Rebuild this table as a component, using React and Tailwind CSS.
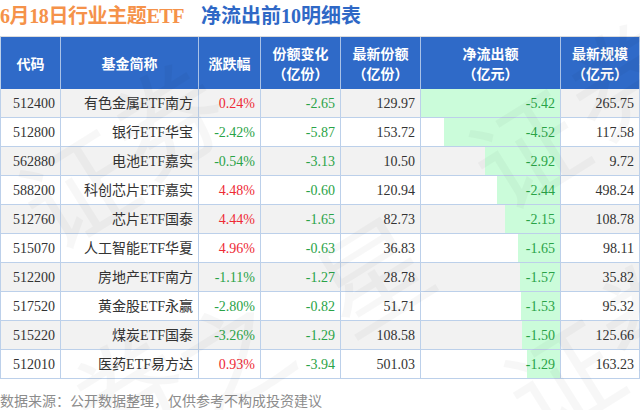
import React from "react";

const rows = [
  ["512400", "有色金属ETF南方", "0.24%", "-2.65", "129.97", -5.42, "265.75"],
  ["512800", "银行ETF华宝", "-2.42%", "-5.87", "153.72", -4.52, "117.58"],
  ["562880", "电池ETF嘉实", "-0.54%", "-3.13", "10.50", -2.92, "9.72"],
  ["588200", "科创芯片ETF嘉实", "4.48%", "-0.60", "120.94", -2.44, "498.24"],
  ["512760", "芯片ETF国泰", "4.44%", "-1.65", "82.73", -2.15, "108.78"],
  ["515070", "人工智能ETF华夏", "4.96%", "-0.63", "36.83", -1.65, "98.11"],
  ["512200", "房地产ETF南方", "-1.11%", "-1.27", "28.78", -1.57, "35.82"],
  ["517520", "黄金股ETF永赢", "-2.80%", "-0.82", "51.71", -1.53, "95.32"],
  ["515220", "煤炭ETF国泰", "-3.26%", "-1.29", "108.58", -1.50, "125.66"],
  ["512010", "医药ETF易方达", "0.93%", "-3.94", "501.03", -1.29, "163.23"],
];

const cols = "grid grid-cols-[60px_138px_62px_80px_80px_140px_79px]";
const font = { fontFamily: '"Liberation Serif", "Noto Sans CJK SC", serif' };

const marks = [
  ["证", 20, 130],
  ["券", 110, 60],
  ["证", 470, 90],
  ["券", 565, 20],
  ["之", 175, 295],
  ["星", 315, 215],
  ["证", 505, 320],
  ["券", 595, 250],
  ["券", 70, 330],
];

function Cell({ children, className = "" }) {
  return (
    <div
      className={`h-[28px] border-r border-[#bcd0ea] flex items-center justify-end pr-[5px] text-[14px] ${className}`}
    >
      {children}
    </div>
  );
}

export default function App() {
  return (
    <div className="relative w-[640px] h-[410px] bg-white overflow-hidden">
      <div
        className="h-[36px] flex items-center pb-[4px] text-[20px] font-bold whitespace-nowrap"
        style={{ fontFamily: '"Liberation Serif", "Noto Sans CJK SC", serif' }}
      >
        <span className="text-[#f5924a] tracking-[-0.4px]">6月18日行业主题ETF</span>
        <span className="text-[#2f68c6] ml-[17px]">净流出前10明细表</span>
      </div>
      <div className="border-t border-[#dcdcdc] border-l border-l-[#bcd0ea]" style={font}>
        <div className={`${cols} h-[52px] bg-[#2f6ac8] text-white font-bold text-[14px] leading-[20px]`} style={{ fontFamily: '"Noto Sans CJK SC", sans-serif' }}>
          {[
            ["代码"],
            ["基金简称"],
            ["涨跌幅"],
            ["份额变化", "（亿份）"],
            ["最新份额", "（亿份）"],
            ["净流出额", "（亿元）"],
            ["最新规模", "（亿元）"],
          ].map((h, i) => (
            <div
              key={i}
              className="border-r border-[#a9c2e8] flex flex-col items-center justify-center text-center"
            >
              {h.map((t, j) => (
                <div key={j}>{t}</div>
              ))}
            </div>
          ))}
        </div>
        {rows.map((r, i) => {
          const bg = i % 2 === 0 ? "bg-[#f2f2f2]" : "bg-white";
          const chgColor = r[2].startsWith("-") ? "text-[#2aa347]" : "text-[#ee2a35]";
          const barW = Math.round((Math.abs(r[5]) / 5.42) * 139);
          return (
            <div key={r[0]} className={`${cols} ${bg} border-b border-[#bcd0ea] text-[#333333]`}>
              <Cell>{r[0]}</Cell>
              <Cell>{r[1]}</Cell>
              <Cell className={chgColor}>{r[2]}</Cell>
              <Cell className="text-[#2aa347]">{r[3]}</Cell>
              <Cell>{r[4]}</Cell>
              <div className="h-[28px] border-r border-[#bcd0ea] flex justify-end">
                <div
                  className="h-full bg-[#cbfcda] flex items-center justify-end pr-[5px] text-[14px] text-[#2aa347] whitespace-nowrap"
                  style={{ width: barW }}
                >
                  {r[5].toFixed(2)}
                </div>
              </div>
              <Cell>{r[6]}</Cell>
            </div>
          );
        })}
      </div>
      <div
        className="mt-[11px] text-[14px] leading-[20px] text-[#8c8c8c] whitespace-nowrap"
        style={{ fontFamily: '"Noto Sans CJK SC", sans-serif' }}
      >
        数据来源：公开数据整理，仅供参考不构成投资建议
      </div>
      <div className="absolute inset-0 pointer-events-none" aria-hidden="true">
        {marks.map(([c, x, y], i) => (
          <span
            key={i}
            className="absolute text-[110px] leading-none font-normal text-black/[0.03] -rotate-[32deg]"
            style={{ left: x, top: y, fontFamily: '"Noto Sans CJK SC", sans-serif' }}
          >
            {c}
          </span>
        ))}
      </div>
    </div>
  );
}
